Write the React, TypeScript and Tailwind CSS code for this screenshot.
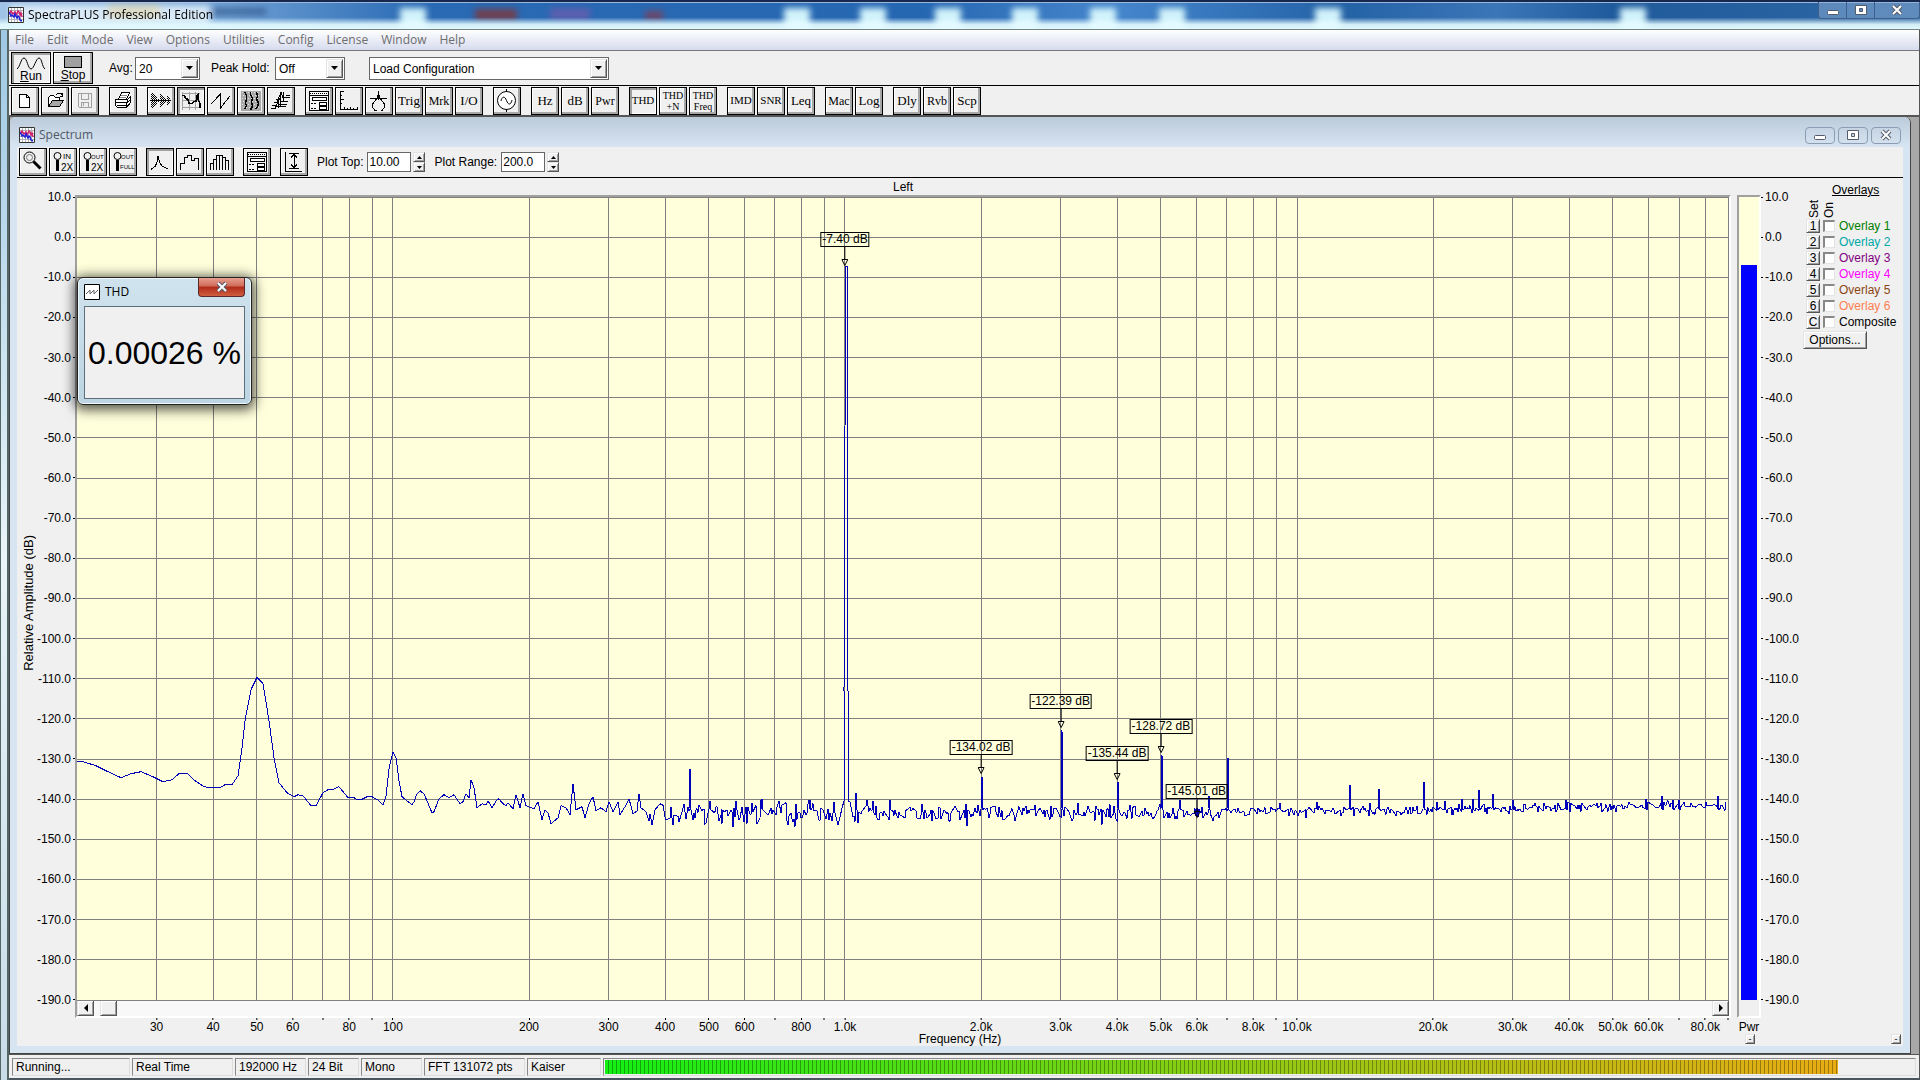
import { useState } from 'react';
import type { ReactNode } from 'react';

const F_MIN = 20;
const F_MAX = 90300;
const DB_TOP = 10;
const DB_RANGE = 200;
const PLOT_W = 1652;
const PLOT_H = 802;

const freqPercent = (f: number) => (Math.log(f / F_MIN) / Math.log(F_MAX / F_MIN)) * 100;
const dbPercent = (db: number) => ((DB_TOP - db) / DB_RANGE) * 100;

const dbTicks = Array.from({ length: 21 }, (_, i) => DB_TOP - i * 10);

const freqTicks = [10, 100, 1000, 10000]
  .flatMap((decade) => [1, 2, 3, 4, 5, 6, 7, 8, 9].map((n) => ({ n, f: n * decade })))
  .filter(({ f }) => f > F_MIN && f < F_MAX);

const formatFreq = (f: number) => (f >= 1000 ? `${(f / 1000).toFixed(1)}k` : String(f));

const markers = [
  { f: 1000, db: -7.4 },
  { f: 2000, db: -134.02 },
  { f: 3000, db: -122.39 },
  { f: 4000, db: -135.44 },
  { f: 5000, db: -128.72 },
  { f: 6000, db: -145.01 },
];

const lowBand = [
  [0, 564], [6, 564], [19, 568], [31, 574], [44, 580], [54, 576], [64, 574], [76, 579], [86, 584], [95, 582],
  [102, 576], [111, 576], [118, 583], [127, 589], [133, 590], [143, 590], [148, 587], [155, 587], [161, 578],
  [165, 550], [168, 523], [174, 492], [180, 480], [186, 486], [192, 523], [197, 560], [202, 585], [210, 595],
  [217, 599], [221, 597], [226, 598], [234, 608], [239, 608], [246, 595], [251, 592], [255, 592], [262, 589],
  [271, 600], [277, 600], [280, 602], [284, 602], [290, 599], [295, 599], [302, 603], [306, 607], [309, 598],
  [312, 571], [316, 554], [319, 560], [322, 583], [325, 599], [335, 607], [337, 604], [340, 596], [343, 593],
  [347, 596], [355, 615], [357, 614], [362, 601], [367, 597], [372, 600], [377, 597], [383, 606], [386, 604],
  [389, 596], [392, 600], [394, 582], [397, 590], [400, 610], [405, 606], [409, 607], [411, 603], [415, 610],
  [420, 602], [422, 601], [425, 605], [429, 608], [431, 605], [436, 611], [439, 597], [443, 610], [446, 596],
  [449, 608], [457, 611], [461, 604], [465, 622], [468, 612], [471, 615], [474, 626], [481, 620], [484, 608],
  [489, 610], [493, 617], [496, 586], [499, 612], [505, 609], [508, 620], [512, 606], [516, 599], [519, 613],
  [524, 610], [529, 614], [532, 604], [536, 614], [541, 604], [543, 617], [548, 609], [552, 601], [556, 616],
  [560, 613], [562, 596], [564, 610], [569, 614], [572, 623], [573, 616], [575, 627], [578, 612], [583, 606],
];

const spikes: Record<number, number> = {
  613: 571, 633: 603, 645: 626, 659: 603, 685: 601, 733: 602, 779: 595, 813: 602, 890: 628, 905: 579, 985: 532,
  1025: 627, 1041: 584, 1085: 557, 1103: 602, 1132: 598, 1151: 560, 1203: 605, 1229: 620, 1240: 604, 1273: 587,
  1293: 605, 1302: 591, 1347: 584, 1360: 604, 1368: 603, 1376: 617, 1385: 601, 1396: 601, 1402: 592, 1416: 596,
  1436: 602, 1489: 602, 1569: 601, 1585: 598, 1596: 602, 1602: 602, 1641: 598,
};

function buildTrace() {
  const points = lowBand.map(([x, y]) => `${x},${y}`);
  let seed = 7;
  const random = () => {
    seed = (seed * 16807) % 2147483647;
    return seed / 2147483647;
  };
  for (let x = 585; x <= PLOT_W - 2; x += 1) {
    if (x === 767) {
      points.push('767,603', '767,493', '768,230', '769,69', '770,69', '770,230', '771,493', '771,603');
      x = 772;
      continue;
    }
    if (spikes[x]) {
      points.push(`${x - 1},611`, `${x},${spikes[x]}`, `${x + 1},612`);
      x += 1;
      continue;
    }
    if (x < 1150 ? random() < 0.35 : random() < 0.3) continue;
    const mean = x < 1150 ? 615 : x < 1300 ? 613 : 613 - ((x - 1300) / 350) * 6;
    const swing = x < 800 ? 15 : x < 1150 ? 10 : 6;
    const noise = (random() + random() - 1) * swing;
    points.push(`${x},${(mean + noise).toFixed(1)}`);
  }
  return points.join(' ');
}

const trace = buildTrace();

const raised =
  'shadow-[inset_0_0_0_1px_#000,inset_-3px_-3px_0_#a8a8a8,inset_2px_2px_0_#fff]';
const pressed =
  'shadow-[inset_0_0_0_1px_#000,inset_3px_3px_0_#a0a0a0,inset_-2px_-2px_0_#fff]';
const bevel =
  'bg-[#f0f0f0] border border-t-[#e3e3e3] border-l-[#e3e3e3] border-r-[#555] border-b-[#555] shadow-[inset_1px_1px_0_#fff,inset_-1px_-1px_0_#a0a0a0]';

function ToolButton({ label, active, children }: { label: string; active?: boolean; children: ReactNode }) {
  return (
    <button
      aria-label={label}
      className={`flex size-7 shrink-0 items-center justify-center overflow-hidden bg-[#f0f0f0] font-['Liberation_Serif',serif] leading-none ${active ? pressed : raised}`}
    >
      {children}
    </button>
  );
}

function Glyph({ children }: { children: ReactNode }) {
  return (
    <svg viewBox="0 0 28 28" className="size-7" fill="none" stroke="#000" strokeWidth="1" shapeRendering="crispEdges">
      {children}
    </svg>
  );
}

const FormGlyph = () => (
  <Glyph>
    <path d="M4.500 4.500h19v19h-19zM4.500 8.500h19" fill="#f8f8f8" />
    <path d="M5 6.500h18" strokeDasharray="1 1" />
    <path d="M7.500 10.500h14v3h-14zM14.500 15.500h7v3h-7zM14.500 19.500h7v3h-7z" fill="#fff" />
    <path d="M6 16.500h6M6 21.500h6" strokeDasharray="2 1" />
  </Glyph>
);

const ZoomGlyph = ({ top, bottom }: { top: string; bottom: string }) => (
  <Glyph>
    <circle cx="8.500" cy="8" r="3.500" shapeRendering="auto" />
    <path d="M8.500 12v11" strokeWidth="3" />
    <g fill="#000" stroke="none" fontFamily="Liberation Sans, sans-serif" shapeRendering="auto">
      <text x={top === 'IN' ? 14 : 12} y="11" fontSize={top === 'IN' ? 8 : 6}>{top}</text>
      <text x={bottom === '2X' ? 12 : 11} y={bottom === '2X' ? 23 : 21} fontSize={bottom === '2X' ? 10 : 6}>{bottom}</text>
    </g>
  </Glyph>
);

const AppIcon = () => (
  <svg viewBox="0 0 16 16" className="size-4 shrink-0" fill="none">
    <path d="M0 0h16v16H0z" fill="#fff" />
    <path d="M3.500 0v16M6.500 0v16M9.500 0v16M12.500 0v16M0 3.500h16M0 6.500h16M0 9.500h16M0 12.500h16" stroke="#b4b4bc" />
    <path d="M1 5l1 1 1-2 2 3 2-2 1 3 2-4 1 1 1 3 1-2 1 4" stroke="#d0206a" strokeWidth="1.500" />
    <path d="M1 5l2 4 1-1 2 2 1-3 2 4 1-2 1 1 1 3 2 1" stroke="#2020d8" strokeWidth="1.500" />
    <path d="M.5.500h15v15H.5z" stroke="#333" />
  </svg>
);

const MinGlyph = () => (
  <svg viewBox="0 0 14 12" className="h-3 w-[14px]">
    <rect x="1.500" y="6.500" width="11" height="4" rx="1" fill="#fff" stroke="#555b6b" />
  </svg>
);

const MaxGlyph = () => (
  <svg viewBox="0 0 14 12" className="h-3 w-[14px]" fillRule="evenodd">
    <path d="M1.500 1.500h11v9h-11zM5.500 4.500h3v3h-3z" fill="#fff" stroke="#555b6b" />
  </svg>
);

const CloseGlyph = () => (
  <svg viewBox="0 0 14 12" className="h-3 w-[14px]">
    <path d="M3 2l8 8M11 2l-8 8" stroke="#555b6b" strokeWidth="4" />
    <path d="M3 2l8 8M11 2l-8 8" stroke="#fff" strokeWidth="2" />
  </svg>
);

function Combo({ label, value, options, width }: { label: string; value: string; options: string[]; width: string }) {
  const [current, setCurrent] = useState(value);
  return (
    <div className={`relative h-[23px] ${width}`}>
      <select
        aria-label={label}
        value={current}
        onChange={(e) => setCurrent(e.target.value)}
        className="h-full w-full appearance-none border border-[#666] bg-white pt-px pl-[3px] text-[12px] leading-5 outline-none"
      >
        {options.map((o) => (
          <option key={o}>{o}</option>
        ))}
      </select>
      <span className={`pointer-events-none absolute top-[2px] right-[2px] flex h-[19px] w-[17px] items-center justify-center ${bevel}`}>
        <svg viewBox="0 0 7 4" className="h-1 w-[7px]">
          <path d="M0 0h7L3.500 4z" />
        </svg>
      </span>
    </div>
  );
}

function Spinner({ id, label, value }: { id: string; label: string; value: string }) {
  const [text, setText] = useState(value);
  const step = (d: number) => setText(String((parseFloat(text) + d).toFixed(1)));
  return (
    <div className="flex items-center">
      <label htmlFor={id} className="mr-1">{label}</label>
      <input
        id={id}
        value={text}
        onChange={(e) => setText(e.target.value)}
        className="mr-[2px] h-5 w-11 border border-[#666] bg-white pl-px text-[12px] outline-none"
      />
      <div className="flex w-3 flex-col">
        <button aria-label={`${label} up`} onClick={() => step(1)} className={`flex h-[10px] items-center justify-center ${bevel}`}>
          <svg viewBox="0 0 5 3" className="h-[3px] w-[5px]"><path d="M0 3h5L2.500 0z" /></svg>
        </button>
        <button aria-label={`${label} down`} onClick={() => step(-1)} className={`flex h-[10px] items-center justify-center ${bevel}`}>
          <svg viewBox="0 0 5 3" className="h-[3px] w-[5px]"><path d="M0 0h5L2.500 3z" /></svg>
        </button>
      </div>
    </div>
  );
}

const menus = ['File', 'Edit', 'Mode', 'View', 'Options', 'Utilities', 'Config', 'License', 'Window', 'Help'];

function TitleBar() {
  const blobs = [413, 797, 873, 948, 1025, 1103, 1172, 1328, 1633];
  return (
    <header className="relative flex h-[30px] shrink-0 items-start justify-between overflow-hidden border-t-2 border-b border-t-[#16284e] border-b-[#6f8580] bg-[linear-gradient(90deg,#9fc3e6_0%,#6d9fd4_12%,#2a6ab4_22%,#2667b2_48%,#4586cc_58%,#2462a6_70%,#3b76b8_78%,#1f5a9c_84%,#2f67a4_100%)] shadow-[inset_0_1px_0_#9db8dc]">
      <svg className="absolute inset-0 h-full w-full" aria-hidden="true">
        <defs>
          <filter id="soft" x="-50%" y="-50%" width="200%" height="200%">
            <feGaussianBlur stdDeviation="3" />
          </filter>
          <linearGradient id="glow" x1="0" y1="0" x2="0" y2="1">
            <stop offset="0.550" stopColor="#e4fbff" stopOpacity="0" />
            <stop offset="0.800" stopColor="#e4fbff" stopOpacity="0.900" />
            <stop offset="1" stopColor="#e4fbff" />
          </linearGradient>
        </defs>
        <g filter="url(#soft)">
          <rect x="10" y="3" width="200" height="20" fill="#e8f3fb" opacity="0.850" />
          <rect x="108" y="2" width="52" height="15" fill="#dfd9b4" opacity="0.700" />
          <rect x="212" y="6" width="54" height="7" fill="#2d5688" opacity="0.700" />
          <rect x="475" y="7" width="42" height="11" fill="#71404f" />
          <rect x="550" y="6" width="40" height="12" fill="#5c5fae" />
          <rect x="645" y="9" width="18" height="9" fill="#6e4766" />
          {blobs.map((x) => (
            <rect key={x} x={x - 13} y="6" width="26" height="24" fill="#d2f3fb" />
          ))}
        </g>
        <rect width="100%" height="28" fill="url(#glow)" />
      </svg>
      <div className="relative flex items-center gap-1 pt-[3px] pl-2 font-['Open_Sans',sans-serif] text-[12px] leading-5">
        <AppIcon />
        <h1>SpectraPLUS Professional Edition</h1>
      </div>
      <div className="relative flex h-[17px] divide-x divide-[#3e5f8c] rounded-b border border-t-0 border-[#3e5f8c] bg-[#8fb0d5]/50">
        <button aria-label="Minimize" className="flex w-7 items-center justify-center"><MinGlyph /></button>
        <button aria-label="Restore" className="flex w-7 items-center justify-center"><MaxGlyph /></button>
        <button aria-label="Close" className="flex w-11 items-center justify-center"><CloseGlyph /></button>
      </div>
    </header>
  );
}

function RunToolbar() {
  return (
    <div className="flex h-[35px] shrink-0 items-center border-b border-black pl-[2px]">
      <button className={`flex h-8 w-10 flex-col items-center justify-end bg-[#f0f0f0] pb-px leading-[13px] ${pressed}`}>
        <svg viewBox="0 0 30 13" className="h-[13px] w-[30px]" fill="none" stroke="#000">
          <path d="M1 12C4 10 5 1 8 1s4 11 7 11 5-11 8-11 3 9 6 11" />
        </svg>
        <span><u>R</u>un</span>
      </button>
      <button className={`ml-[2px] flex h-8 w-10 flex-col items-center justify-end bg-[#f0f0f0] pb-[2px] leading-[13px] ${raised}`}>
        <span className="mb-px h-3 w-[18px] border border-black bg-[#a0a0a0]" />
        <span><u>S</u>top</span>
      </button>
      <span className="ml-4 w-[26px]">Avg:</span>
      <Combo label="Avg" value="20" options={['1', '10', '20', '50']} width="w-[65px]" />
      <span className="ml-[11px] w-16">Peak Hold:</span>
      <Combo label="Peak Hold" value="Off" options={['Off', 'On']} width="w-[70px]" />
      <div className="ml-6">
        <Combo label="Configuration" value="Load Configuration" options={['Load Configuration']} width="w-[240px]" />
      </div>
    </div>
  );
}

function ModeToolbar() {
  return (
    <div className="flex h-[31px] shrink-0 items-center gap-[10px] border-b-2 border-[#555] pl-[2px]">
      <div className="flex gap-[2px]">
        <ToolButton label="New">
          <Glyph><path d="M8.500 7.500h7l3 3v10h-10zM15.500 7.500v3h3" fill="#fff" /></Glyph>
        </ToolButton>
        <ToolButton label="Open">
          <Glyph>
            <path d="M7.500 19.500v-9l2-2h3l2 2h4v3" fill="#fff" />
            <path d="M7.500 19.500l4-6h11l-4 6z" fill="#a8a8a8" />
            <path d="M15 7.500l2-1h3l1.500 2M21.500 6v3h-3" />
          </Glyph>
        </ToolButton>
        <ToolButton label="Save">
          <Glyph>
            <path d="M7.500 6.500h13v14h-12l-1-1zM10.500 6.500v6h7v-6M10.500 20v-5h7v5M12.500 16v3" stroke="#a0a0a0" />
          </Glyph>
        </ToolButton>
      </div>
      <ToolButton label="Print">
        <Glyph>
          <path d="M9.500 12.500l3-7h8l-3 7z" fill="#fff" />
          <path d="M12 8.500h6M11 10.500h6" stroke="#888" />
          <path d="M6.500 12.500h12v3h-12zM6.500 15.500v3l2 2h9v-5M18.500 12.500l3-3v6l-4 5" fill="#fff" />
          <path d="M8 18.500h9M18.500 15.500l3-3" />
        </Glyph>
      </ToolButton>
      <div className="flex gap-[2px]">
        <ToolButton label="Time series">
          <Glyph>
            <path d="M4.500 7v14M5.500 6v15M7.500 8v11M9.500 10v7M13.500 7v13M15.500 9v9M17.500 11v5M6.500 7v13M8.500 9v9M14.500 8v11M16.500 10v7M20.500 9v9M22.500 11v5M21.500 10v7" strokeDasharray="1 1" />
            <path d="M3 13.500h21M11.500 12v3M18.500 12v3" />
          </Glyph>
        </ToolButton>
        <ToolButton label="Spectrum" active>
          <Glyph>
            <path d="M5.500 5v18M12.500 5v18M18.500 5v18M5 6.500h18M5 13.500h18M5 20.500h18" stroke="#a0a0a0" />
            <path d="M5 8.500h2l2 3 2 1 1 4h3l2-2h2l1-6 1-1v5l2 4v4" strokeWidth="1.500" />
          </Glyph>
        </ToolButton>
        <ToolButton label="Phase">
          <Glyph><path d="M4 17L13.500 7v14L23 9" /></Glyph>
        </ToolButton>
        <ToolButton label="Spectrogram">
          <Glyph>
            <path d="M4 4h20v20H4z" fill="#a8a8a8" stroke="none" />
            <path d="M5 5.500h18M6 8.500h18M5 11.500h18M6 14.500h18M5 17.500h18M6 20.500h18" stroke="#e4e4e4" strokeDasharray="1 2" />
            <path d="M7.500 5l2 3v4l-1 4 1 3-2 3M13.500 5v3l2 3-1 4 1 4-2 4M19.500 5l1 4-1 3 2 4-1 4-2 2" strokeWidth="1.500" />
          </Glyph>
        </ToolButton>
        <ToolButton label="3-D surface">
          <Glyph>
            <path d="M4 21.500h4l1-2h10M5 18.500h4l2-3 1 2h8M7 15.500h3l2-4 2 3h7M9 12.500h2l3-7 2 5h7M13.500 8v12M16.500 5v9M19 8.500h4M11.500 14v7" />
          </Glyph>
        </ToolButton>
      </div>
      <div className="flex gap-[2px]">
        <ToolButton label="Options"><FormGlyph /></ToolButton>
        <ToolButton label="Scaling">
          <Glyph>
            <path d="M5.500 4v19M5 22.500h18M5 4.500h4M5 8.500h2M5 12.500h4M5 16.500h2M9.500 20v3M12.500 21v2M15.500 20v3M18.500 21v2M22.500 20v3" />
          </Glyph>
        </ToolButton>
        <ToolButton label="Calibration">
          <Glyph>
            <path d="M13.500 4v9M5 11.500h17M13.500 7l-2 5-4 5v3l2 3h2M13.500 7l2 5 4 5v3l-2 3h-2" />
          </Glyph>
        </ToolButton>
        <ToolButton label="Trigger"><span className="text-[13px]">Trig</span></ToolButton>
        <ToolButton label="Markers"><span className="text-[12px]">Mrk</span></ToolButton>
        <ToolButton label="Input output"><span className="text-[13px]">I/O</span></ToolButton>
      </div>
      <ToolButton label="Signal generator">
        <Glyph>
          <g shapeRendering="auto">
            <circle cx="13.500" cy="13.500" r="9" fill="#fff" />
            <path d="M8 14c1-5 4-5 5.500-.5s4.500 5 5.500-.5M13.500 2v3M13.500 22v3" />
          </g>
        </Glyph>
      </ToolButton>
      <div className="flex gap-[2px]">
        <ToolButton label="Frequency"><span className="text-[13px]">Hz</span></ToolButton>
        <ToolButton label="Decibels"><span className="text-[13px]">dB</span></ToolButton>
        <ToolButton label="Power"><span className="text-[12px]">Pwr</span></ToolButton>
      </div>
      <div className="flex gap-[2px]">
        <ToolButton label="THD" active><span className="text-[11px]">THD</span></ToolButton>
        <ToolButton label="THD plus noise">
          <span className="text-[10px] leading-[11px]">THD<span className="block">+N</span></span>
        </ToolButton>
        <ToolButton label="THD versus frequency">
          <span className="text-[10px] leading-[11px]">THD<span className="block">Freq</span></span>
        </ToolButton>
      </div>
      <div className="flex gap-[2px]">
        <ToolButton label="IMD"><span className="text-[11px]">IMD</span></ToolButton>
        <ToolButton label="SNR"><span className="text-[11px]">SNR</span></ToolButton>
        <ToolButton label="Leq"><span className="text-[13px]">Leq</span></ToolButton>
      </div>
      <div className="flex gap-[2px]">
        <ToolButton label="Macro"><span className="text-[12px]">Mac</span></ToolButton>
        <ToolButton label="Log"><span className="text-[13px]">Log</span></ToolButton>
      </div>
      <div className="flex gap-[2px]">
        <ToolButton label="Delay"><span className="text-[13px]">Dly</span></ToolButton>
        <ToolButton label="Reverb"><span className="text-[12px]">Rvb</span></ToolButton>
        <ToolButton label="Scope"><span className="text-[13px]">Scp</span></ToolButton>
      </div>
    </div>
  );
}

function SpectrumToolbar() {
  return (
    <div className="flex h-[31px] shrink-0 items-center gap-[9px] border-b border-black pl-[2px]">
      <div className="flex gap-[2px]">
        <ToolButton label="Zoom">
          <Glyph>
            <g shapeRendering="auto">
              <circle cx="10.500" cy="9.500" r="5.500" />
              <circle cx="10.500" cy="9.500" r="3" stroke="#777" />
              <path d="M14.500 13.500l7 7" strokeWidth="3" />
            </g>
          </Glyph>
        </ToolButton>
        <ToolButton label="Zoom in 2X"><ZoomGlyph top="IN" bottom="2X" /></ToolButton>
        <ToolButton label="Zoom out 2X"><ZoomGlyph top="OUT" bottom="2X" /></ToolButton>
        <ToolButton label="Zoom out full"><ZoomGlyph top="OUT" bottom="FULL" /></ToolButton>
      </div>
      <div className="flex gap-[2px]">
        <ToolButton label="Narrowband" active>
          <Glyph><path d="M5 21.500l4-3 2-4 .5-6 1 0 1 6 3 4 3 1 3 2" /></Glyph>
        </ToolButton>
        <ToolButton label="Octave">
          <Glyph><path d="M4.500 22v-7h4v-6h3v-2h4v5h3v-2h4v12" /></Glyph>
        </ToolButton>
        <ToolButton label="Bars">
          <Glyph><path d="M4.500 22v-7h3v-4h3v-4h6v2h3v3h3v10M7.500 15v7M10.500 11v11M13.500 7v15M16.500 8v14M19.500 12v10" /></Glyph>
        </ToolButton>
      </div>
      <ToolButton label="View options"><FormGlyph /></ToolButton>
      <ToolButton label="Autoscale">
        <Glyph>
          <path d="M5.500 4v20M5 23.500h17M9 5.500h10M9 20.500h10M14 6v14M11 9.500l3-3 3 3M11 16.500l3 3 3-3" />
        </Glyph>
      </ToolButton>
      <Spinner id="plot-top" label="Plot Top:" value="10.00" />
      <Spinner id="plot-range" label="Plot Range:" value="200.0" />
    </div>
  );
}

function Plot() {
  return (
    <div className="relative min-h-0 flex-1 bg-[#ffffdc]">
      <svg className="absolute inset-0 h-full w-full overflow-visible" shapeRendering="crispEdges">
        {freqTicks.map(({ f }) => (
          <line key={f} x1={`${freqPercent(f)}%`} x2={`${freqPercent(f)}%`} y1="0" y2="100%" stroke="#808080" />
        ))}
        {dbTicks.map((db) => (
          <line key={db} x1="0" x2="100%" y1={`${dbPercent(db)}%`} y2={`${dbPercent(db)}%`} stroke="#808080" />
        ))}
      </svg>
      <svg
        viewBox={`0 0 ${PLOT_W} ${PLOT_H}`}
        preserveAspectRatio="none"
        className="absolute inset-0 h-full w-full"
        shapeRendering="crispEdges"
      >
        <polyline points={trace} fill="none" stroke="#0000b8" strokeWidth="1" vectorEffect="non-scaling-stroke" />
      </svg>
      {markers.map((m) => (
        <div
          key={m.f}
          className="absolute flex -translate-x-1/2 -translate-y-full flex-col items-center"
          style={{ left: `${freqPercent(m.f)}%`, top: `${dbPercent(m.db)}%` }}
        >
          <span className="h-[15px] border border-black px-px text-[12px] leading-[13px] whitespace-nowrap">
            {m.db.toFixed(2)} dB
          </span>
          <svg viewBox="0 0 7 20" className="h-5 w-[7px]" fill="none" stroke="#000">
            <path d="M3.500 0v12M.5 12.500h6l-3 6z" />
          </svg>
        </div>
      ))}
    </div>
  );
}

function ScrollBar() {
  return (
    <div className="flex h-4 shrink-0 items-stretch bg-[#f8f8f8]">
      <button aria-label="Scroll left" className={`flex w-[17px] items-center justify-center ${bevel}`}>
        <svg viewBox="0 0 4 8" className="h-2 w-1"><path d="M4 0v8L0 4z" /></svg>
      </button>
      <div className={`ml-[6px] w-[17px] ${bevel}`} />
      <div className="flex-1" />
      <button aria-label="Scroll right" className={`flex w-[17px] items-center justify-center ${bevel}`}>
        <svg viewBox="0 0 4 8" className="h-2 w-1"><path d="M0 0v8l4-4z" /></svg>
      </button>
    </div>
  );
}

const overlays = [
  { key: '1', name: 'Overlay 1', color: 'text-[#008000]' },
  { key: '2', name: 'Overlay 2', color: 'text-[#00a8a8]' },
  { key: '3', name: 'Overlay 3', color: 'text-[#800080]' },
  { key: '4', name: 'Overlay 4', color: 'text-[#ff00ff]' },
  { key: '5', name: 'Overlay 5', color: 'text-[#8b4513]' },
  { key: '6', name: 'Overlay 6', color: 'text-[#ff7f50]' },
  { key: 'C', name: 'Composite', color: 'text-black' },
];

function Overlays() {
  return (
    <aside className="w-[100px] shrink-0 pt-1">
      <h3 className="pl-[29px] leading-4 underline">Overlays</h3>
      <div className="flex h-5 items-end pl-1 leading-[14px]">
        <span className="w-[14px] rotate-180 [writing-mode:vertical-rl]">Set</span>
        <span className="ml-px w-[14px] rotate-180 [writing-mode:vertical-rl]">On</span>
      </div>
      <ul>
        {overlays.map((o) => (
          <li key={o.key} className="flex h-4 items-center pl-[3px]">
            <button className={`h-[14px] w-[14px] text-center text-[12px] leading-[11px] ${bevel}`}>{o.key}</button>
            <input
              id={`overlay-${o.key}`}
              type="checkbox"
              className="ml-[3px] size-3 appearance-none border border-t-2 border-l-2 border-[#e3e3e3] border-t-[#888] border-l-[#888] bg-white checked:bg-[#888]"
            />
            <label htmlFor={`overlay-${o.key}`} className={`ml-1 ${o.color}`}>{o.name}</label>
          </li>
        ))}
      </ul>
      <button className={`mt-px h-[18px] w-16 leading-none ${bevel}`}>Options...</button>
    </aside>
  );
}

function SpectrumWindow() {
  return (
    <section className="mr-2 flex min-h-0 flex-1 flex-col rounded-t-md border-r border-b border-[#444] bg-[#d7e4f2] px-[7px] pb-[7px]">
      <div className="-mx-[7px] flex h-[30px] shrink-0 items-center justify-between rounded-t-md bg-gradient-to-b from-[#bccbda] to-[#d7e4f2] px-[9px] pt-[6px]">
        <div className="flex items-center gap-1 font-['Open_Sans',sans-serif] text-[12px] text-[#505a66]">
          <AppIcon />
          <h2>Spectrum</h2>
        </div>
        <div className="flex gap-[3px]">
          <button aria-label="Minimize Spectrum" className="flex h-[17px] w-[30px] items-center justify-center rounded-sm border border-[#8c9db3]"><MinGlyph /></button>
          <button aria-label="Restore Spectrum" className="flex h-[17px] w-[30px] items-center justify-center rounded-sm border border-[#8c9db3]"><MaxGlyph /></button>
          <button aria-label="Close Spectrum" className="flex h-[17px] w-[30px] items-center justify-center rounded-sm border border-[#8c9db3]"><CloseGlyph /></button>
        </div>
      </div>
      <div className="flex min-h-0 flex-1 flex-col bg-[#f0f0f0]">
        <SpectrumToolbar />
        <div className="flex min-h-0 flex-1">
          {/* Amplitude axis */}
          <div className="flex w-[58px] shrink-0 justify-between pt-[19px] pb-[34px]">
            <div className="flex w-7 items-center justify-center pt-2 pl-1">
              <span className="rotate-180 text-[13px] whitespace-nowrap [writing-mode:vertical-rl]">Relative Amplitude (dB)</span>
            </div>
            <div className="flex flex-col justify-between">
              {dbTicks.map((db) => (
                <div key={db} className="flex h-0 items-center justify-end gap-[2px]">
                  {db.toFixed(1)}
                  <span className="h-px w-[2px] bg-black" />
                </div>
              ))}
            </div>
          </div>

          {/* Plot */}
          <div className="flex min-w-0 flex-1 flex-col">
            <div className="h-[17px] text-center leading-[18px]">Left</div>
            <div className="flex min-h-0 flex-1 flex-col border-2 border-t-[#a0a0a0] border-r-white border-b-white border-l-[#a0a0a0]">
              <Plot />
              <ScrollBar />
            </div>
            <div className="relative mx-[2px] h-4">
              {freqTicks.map(({ n, f }) => (
                <div
                  key={f}
                  className="absolute top-0 flex -translate-x-1/2 flex-col items-center leading-[14px]"
                  style={{ left: `${freqPercent(f)}%` }}
                >
                  <span className="h-[2px] w-px bg-black" />
                  {n !== 7 && n !== 9 && formatFreq(f)}
                </div>
              ))}
            </div>
          </div>

          {/* Power meter */}
          <div className="ml-[6px] flex w-[66px] shrink-0">
            <div className="flex w-6 flex-col items-center pt-[17px]">
              <div className="flex w-full flex-1 flex-col border-2 border-t-[#a0a0a0] border-r-white border-b-white border-l-[#a0a0a0] pb-4">
                <div className="relative flex-1 bg-[#ffffdc]">
                  <div className="absolute inset-x-[2px] bottom-0 bg-[#0000ff]" style={{ top: `${dbPercent(-7)}%` }} />
                </div>
              </div>
              <span className="h-4 leading-[18px]">Pwr</span>
            </div>
            <div className="flex flex-col justify-between pt-[19px] pb-[34px]">
              {dbTicks.map((db) => (
                <div key={db} className="flex h-0 items-center gap-[2px]">
                  <span className="h-px w-[2px] bg-black" />
                  {db.toFixed(1)}
                </div>
              ))}
            </div>
          </div>

          <Overlays />
        </div>
        <div className="grid h-3 shrink-0 grid-cols-3">
          <span />
          <span className="text-center leading-[10px]">Frequency (Hz)</span>
          <div className="flex justify-end gap-[136px] pr-[2px]">
            <button aria-label="Collapse power" className={`h-[10px] w-[10px] text-[9px] leading-[6px] ${bevel}`}>-</button>
            <button aria-label="Collapse overlays" className={`h-[10px] w-[10px] text-[9px] leading-[6px] ${bevel}`}>-</button>
          </div>
        </div>
      </div>
    </section>
  );
}

function StatusBar() {
  const cells = [
    { text: 'Running...', width: 'w-[118px]' },
    { text: 'Real Time', width: 'w-[101px]' },
    { text: '192000 Hz', width: 'w-[71px]' },
    { text: '24 Bit', width: 'w-[51px]' },
    { text: 'Mono', width: 'w-[61px]' },
    { text: 'FFT 131072 pts', width: 'w-[101px]' },
    { text: 'Kaiser', width: 'w-[74px]' },
  ];
  return (
    <footer className="flex h-[26px] shrink-0 gap-[2px] border-t border-b-2 border-t-[#555] border-b-[#4a5560] bg-[#f0f0f0] px-[3px] pt-[3px] pb-[2px]">
      {cells.map((c) => (
        <div key={c.text} className={`${c.width} shrink-0 border border-t-[#888] border-r-[#ddd] border-b-[#ddd] border-l-[#888] pl-[3px] leading-4`}>
          {c.text}
        </div>
      ))}
      <div className="flex flex-1 border border-t-[#888] border-r-[#ddd] border-b-[#ddd] border-l-[#888] p-px">
        <div className="mr-[76px] flex-1 bg-[repeating-linear-gradient(90deg,transparent_0px,transparent_3px,#00000050_3px,#00000050_4px),linear-gradient(90deg,#14f014,#8ccc14_50%,#e8ac14)]" />
      </div>
    </footer>
  );
}

function ThdWindow() {
  return (
    <div className="absolute top-[277px] left-[77px] flex h-32 w-[175px] flex-col rounded-md border border-[#222] bg-gradient-to-b from-[#cfe3ee] to-[#bdd5e2] px-[6px] pb-[5px] shadow-[0_2px_12px_3px_rgba(0,0,0,0.65),inset_0_0_0_1px_#eef8fc]">
      <div className="flex h-7 shrink-0 items-start justify-between">
        <div className="flex items-center gap-[5px] pt-[6px] font-['Open_Sans',sans-serif] leading-4">
          <svg viewBox="0 0 16 16" className="size-4" fill="none" stroke="#000">
            <path d="M.5.500h15v15H.5z" fill="#fff" />
            <path d="M2 10l4-4v4l4-4v4l4-4" stroke="#666" />
          </svg>
          THD
        </div>
        <button
          aria-label="Close THD"
          className="flex h-[19px] w-[47px] items-center justify-center rounded-b border border-t-0 border-[#5a2a28] bg-[linear-gradient(#e8a090,#d06a58_45%,#b02a18_50%,#d06040)]"
        >
          <CloseGlyph />
        </button>
      </div>
      <div className="flex flex-1 items-center justify-center border border-[#5e6f7c] bg-[#f0f0f0] font-['Liberation_Sans_Narrow','Liberation_Sans',sans-serif] text-[32px] leading-none whitespace-nowrap">
        0.00026 %
      </div>
    </div>
  );
}

export default function App() {
  return (
    <div className="relative flex h-screen w-full flex-col overflow-hidden bg-[#f0f0f0] font-['Liberation_Sans',Arial,sans-serif] text-[12px] leading-4 text-black">
      <TitleBar />
      <div className="flex min-h-0 flex-1">
        <div className="w-[9px] shrink-0 border-r-2 border-l border-[#566] bg-gradient-to-b from-[#9fc8e4] via-[#e8f4f8] to-[#c8dce8]" />
        <div className="flex min-h-0 min-w-0 flex-1 flex-col border-r border-[#555]">
          <nav className="flex h-[21px] shrink-0 items-center gap-[13px] border-b border-[#777] bg-gradient-to-b from-white to-[#d6dbee] pl-[6px] font-['Open_Sans',sans-serif] text-[#6d6d6d]">
            {menus.map((m) => (
              <button key={m}>{m}</button>
            ))}
          </nav>
          <RunToolbar />
          <ModeToolbar />
          <div className="flex min-h-0 flex-1 bg-[#a8a8a8]">
            <div className="w-px bg-[#444]" />
            <SpectrumWindow />
          </div>
          <StatusBar />
        </div>
      </div>
      <ThdWindow />
    </div>
  );
}
